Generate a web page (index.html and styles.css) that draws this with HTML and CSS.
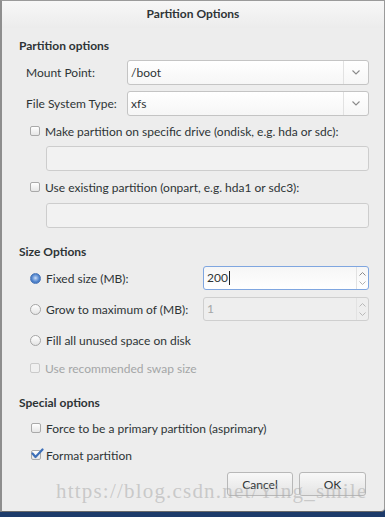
FILE: index.html
```html
<!DOCTYPE html>
<html>
<head>
    <title>Partition Options</title>
    <meta name="viewport" content="width=device-width, initial-scale=1.0">
    <link rel="stylesheet" href="styles.css">
</head>
<body>
    <div class="window">
        <div class="titlebar">Partition Options</div>

        <div class="content">
            <h2 class="heading first">Partition options</h2>

            <div class="field-row mount">
                <label class="field-label">Mount Point:</label>
                <div class="combo">
                    <span class="combo-text">/boot</span>
                    <span class="combo-btn">
                        <svg width="8" height="5" viewBox="0 0 8 5"><path d="M0.5 0.5 L4 4 L7.5 0.5" fill="none" stroke="#8a8a8a" stroke-width="1.1"/></svg>
                    </span>
                </div>
            </div>

            <div class="field-row fstype">
                <label class="field-label">File System Type:</label>
                <div class="combo">
                    <span class="combo-text">xfs</span>
                    <span class="combo-btn">
                        <svg width="8" height="5" viewBox="0 0 8 5"><path d="M0.5 0.5 L4 4 L7.5 0.5" fill="none" stroke="#8a8a8a" stroke-width="1.1"/></svg>
                    </span>
                </div>
            </div>

            <div class="check-row ondisk">
                <span class="checkbox"></span>
                <span>Make partition on specific drive (ondisk, e.g. hda or sdc):</span>
            </div>
            <div class="entry entry-ondisk"></div>

            <div class="check-row onpart">
                <span class="checkbox"></span>
                <span>Use existing partition (onpart, e.g. hda1 or sdc3):</span>
            </div>
            <div class="entry entry-onpart"></div>

            <h2 class="heading size">Size Options</h2>

            <div class="size-row fixed">
                <span class="radio checked"></span>
                <span class="size-label">Fixed size (MB):</span>
                <div class="spin focused">
                    <span class="spin-text">200<span class="caret"></span></span>
                    <span class="spin-btns">
                        <svg width="7" height="4" viewBox="0 0 7 4"><path d="M0.5 3.5 L3.5 0.5 L6.5 3.5" fill="none" stroke="#8a8a8a" stroke-width="1"/></svg>
                        <svg width="7" height="4" viewBox="0 0 7 4"><path d="M0.5 0.5 L3.5 3.5 L6.5 0.5" fill="none" stroke="#b0b0b0" stroke-width="1"/></svg>
                    </span>
                </div>
            </div>

            <div class="size-row grow">
                <span class="radio"></span>
                <span class="size-label">Grow to maximum of (MB):</span>
                <div class="spin disabled">
                    <span class="spin-text">1</span>
                    <span class="spin-btns">
                        <svg width="7" height="4" viewBox="0 0 7 4"><path d="M0.5 3.5 L3.5 0.5 L6.5 3.5" fill="none" stroke="#b8b8b8" stroke-width="1"/></svg>
                        <svg width="7" height="4" viewBox="0 0 7 4"><path d="M0.5 0.5 L3.5 3.5 L6.5 0.5" fill="none" stroke="#b8b8b8" stroke-width="1"/></svg>
                    </span>
                </div>
            </div>

            <div class="check-row fill">
                <span class="radio"></span>
                <span>Fill all unused space on disk</span>
            </div>

            <div class="check-row swap disabled-text">
                <span class="checkbox dim"></span>
                <span>Use recommended swap size</span>
            </div>

            <h2 class="heading special">Special options</h2>

            <div class="check-row force">
                <span class="checkbox"></span>
                <span>Force to be a primary partition (asprimary)</span>
            </div>

            <div class="check-row format">
                <span class="checkbox">
                    <svg class="tick" width="13" height="11" viewBox="0 0 13 11"><path d="M1.5 5.5 L4.5 9 L11.5 1.5" fill="none" stroke="#3d6fb8" stroke-width="2.2" stroke-linecap="round" stroke-linejoin="round"/></svg>
                </span>
                <span>Format partition</span>
            </div>

            <div class="button-container">
                <button type="button" class="btn cancel">Cancel</button>
                <button type="button" class="btn ok">OK</button>
            </div>
        </div>

        <div class="watermark">https://blog.csdn.net/Ying_smile</div>
    </div>
</body>
</html>
```

FILE: styles.css
```css
body {
    margin: 0;
    background-color: #1d3b6b;
    font-family: Lato, "Noto Sans", sans-serif;
    font-size: 12px;
    color: #2e3436;
}

.window {
    position: relative;
    width: 382px;
    height: 510px;
    background-color: #ededed;
    border-left: 2px solid #8e8e8e;
    border-right: 1px solid #9a9a9a;
    border-top: 1px solid #9a9a9a;
    border-bottom: 1px solid #6a6a6a;
    border-bottom-right-radius: 4px;
    overflow: hidden;
}

.titlebar {
    height: 27px;
    line-height: 26px;
    text-align: center;
    font-weight: bold;
    font-size: 12px;
    background: linear-gradient(#f7f7f7, #ececec);
}

.content {
    padding-left: 17px;
}

.heading {
    margin: 0;
    height: 18px;
    line-height: 18px;
    font-size: 12px;
    font-weight: bold;
}

.heading.first {
    margin-top: 9px;
}

.heading.size {
    margin-top: 15px;
}

.heading.special {
    margin-top: 17px;
}

.field-row {
    display: flex;
    align-items: center;
}

.field-row.mount {
    margin-top: 5px;
}

.field-row.fstype {
    margin-top: 6px;
}

.field-label {
    width: 108px;
    padding-left: 7px;
    box-sizing: border-box;
    white-space: nowrap;
}

.combo {
    display: flex;
    width: 242px;
    height: 25px;
    box-sizing: border-box;
    border: 1px solid #c4c4c4;
    border-radius: 3px;
    background: linear-gradient(#ffffff, #f6f6f6);
}

.combo-text {
    flex: 1;
    line-height: 23px;
    padding-left: 3px;
}

.combo-btn {
    width: 24px;
    border-left: 1px solid #e2e2e2;
    display: flex;
    align-items: center;
    justify-content: center;
}

.check-row {
    display: flex;
    align-items: center;
    height: 18px;
    padding-left: 11px;
    white-space: nowrap;
}

.check-row.ondisk {
    margin-top: 6px;
}

.check-row.onpart {
    margin-top: 7px;
}

.check-row.fill {
    margin-top: 10px;
}

.check-row.swap {
    margin-top: 10px;
}

.check-row.force {
    margin-top: 7px;
    padding-left: 12px;
}

.check-row.format {
    margin-top: 9px;
    padding-left: 12px;
}

.disabled-text {
    color: #a4a6a7;
}

.checkbox {
    position: relative;
    width: 10px;
    height: 10px;
    margin-right: 5px;
    box-sizing: border-box;
    border: 1px solid #a9a9a9;
    border-radius: 2px;
    background: linear-gradient(#ffffff, #e6e6e6);
    flex-shrink: 0;
}

.checkbox.dim {
    border-color: #cacaca;
    background: #f0f0f0;
}

.tick {
    position: absolute;
    left: -1px;
    top: -3px;
}

.radio {
    width: 11px;
    height: 11px;
    margin-right: 5px;
    box-sizing: border-box;
    border: 1px solid #a5a5a5;
    border-radius: 50%;
    background: linear-gradient(#ffffff, #e4e4e4);
    flex-shrink: 0;
}

.radio.checked {
    border-color: #4a76b8;
    background: radial-gradient(circle at 50% 45%, #cfe0f7 0, #8fb2e4 25%, #4a7fc9 60%, #3f6fb5 100%);
}

.entry {
    margin-left: 27px;
    width: 323px;
    height: 25px;
    box-sizing: border-box;
    border: 1px solid #cdcdcd;
    border-radius: 3px;
    background-color: #f2f2f2;
}

.entry-ondisk {
    margin-top: 6px;
}

.entry-onpart {
    margin-top: 7px;
}

.size-row {
    display: flex;
    align-items: center;
    padding-left: 11px;
    white-space: nowrap;
}

.size-row.fixed {
    margin-top: 5px;
}

.size-row.grow {
    margin-top: 7px;
}

.size-label {
    width: 157px;
}

.spin {
    display: flex;
    width: 166px;
    height: 24px;
    box-sizing: border-box;
    border: 1px solid #c4c4c4;
    border-radius: 3px;
}

.spin.focused {
    border-color: #7fa6e0;
    background: linear-gradient(#f6f6f6, #ffffff);
}

.spin.disabled {
    border-color: #cfcfcf;
    background-color: #eeeeee;
    color: #a4a6a7;
}

.spin-text {
    flex: 1;
    line-height: 22px;
    padding-left: 3px;
}

.caret {
    display: inline-block;
    width: 1px;
    height: 14px;
    margin-left: 1px;
    vertical-align: -3px;
    background-color: #222;
}

.spin-btns {
    width: 11px;
    display: flex;
    flex-direction: column;
    justify-content: space-around;
    align-items: center;
    border-left: 1px solid #e2e2e2;
    padding: 2px 0;
}

.button-container {
    display: flex;
    justify-content: flex-end;
    gap: 6px;
    margin-top: 8px;
    padding-right: 18px;
}

.btn {
    height: 24px;
    padding: 0;
    font-family: Lato, "Noto Sans", sans-serif;
    font-size: 12px;
    color: #2e3436;
    border: 1px solid #b8b8b8;
    border-radius: 3px;
    background: linear-gradient(#f8f8f8, #e4e4e4);
}

.btn.cancel {
    width: 66px;
}

.btn.ok {
    width: 67px;
}

.watermark {
    position: absolute;
    left: 54px;
    top: 478px;
    font-family: "Liberation Serif", serif;
    font-size: 21px;
    letter-spacing: 1.2px;
    color: rgba(170, 170, 170, 0.55);
    white-space: nowrap;
}
```
